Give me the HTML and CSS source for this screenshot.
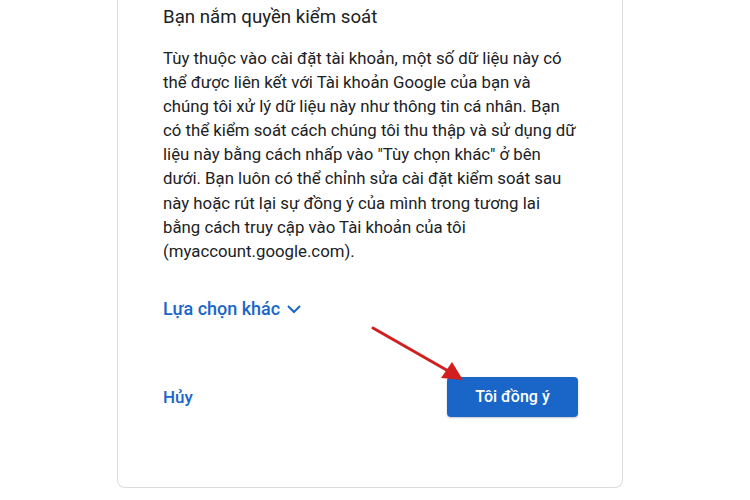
FILE: index.html
```html
<!DOCTYPE html>
<html lang="vi">
<head>
<meta charset="utf-8">
<link rel="stylesheet" href="styles.css">
</head>
<body>
<div class="card">
  <h2 class="title">Bạn nắm quyền kiểm soát</h2>
  <p class="text">Tùy thuộc vào cài đặt tài khoản, một số dữ liệu này có<br>thể được liên kết với Tài khoản Google của bạn và<br>chúng tôi xử lý dữ liệu này như thông tin cá nhân. Bạn<br>có thể kiểm soát cách chúng tôi thu thập và sử dụng dữ<br>liệu này bằng cách nhấp vào "Tùy chọn khác" ở bên<br>dưới. Bạn luôn có thể chỉnh sửa cài đặt kiểm soát sau<br>này hoặc rút lại sự đồng ý của mình trong tương lai<br>bằng cách truy cập vào Tài khoản của tôi<br>(myaccount.google.com).</p>
  <a class="more">Lựa chọn khác <svg class="chev" viewBox="0 0 16 16" width="16" height="16"><path d="M2 5 L8 11 L14 5" fill="none" stroke="currentColor" stroke-width="2"/></svg></a>
  <div class="actions">
    <a class="cancel">Hủy</a>
    <button class="agree">Tôi đồng ý</button>
  </div>
</div>
<svg class="arrow" width="750" height="500" viewBox="0 0 750 500">
  <line x1="373" y1="328" x2="450" y2="372" stroke="#d11f1f" stroke-width="3" stroke-linecap="round"/>
  <polygon points="463,380 441,378 452,362" fill="#d11f1f"/>
</svg>
</body>
</html>
```
FILE: styles.css
```css
html, body {
  margin: 0;
  padding: 0;
  background: #ffffff;
}
body {
  font-family: Roboto, "Liberation Sans", sans-serif;
  color: #202124;
  position: relative;
  width: 750px;
  height: 500px;
  overflow: hidden;
}
.card {
  margin-left: 117px;
  width: 506px;
  border: 1px solid #dadce0;
  border-top: none;
  border-radius: 0 0 8px 8px;
  padding: 5px 44px 70px 45px;
  box-sizing: border-box;
  display: flex;
  flex-direction: column;
  align-items: flex-start;
}
.title {
  margin: 0;
  font-size: 18.7px;
  font-weight: 400;
  line-height: 24px;
  color: #202124;
}
.text {
  margin: 17px 0 0;
  font-size: 16.8px;
  line-height: 24.1px;
  color: #202124;
}
.more {
  margin-top: 34px;
  display: flex;
  align-items: center;
  gap: 6px;
  font-size: 18px;
  line-height: 24px;
  color: #1a66c8;
  font-weight: 500;
}
.chev {
  display: block;
}
.actions {
  margin-top: 56px;
  align-self: stretch;
  display: flex;
  align-items: center;
  justify-content: space-between;
}
.cancel {
  font-size: 17px;
  font-weight: 500;
  color: #1a66c8;
}
.agree {
  width: 131px;
  height: 40px;
  border: none;
  border-radius: 4px;
  background: #1a66c8;
  color: #ffffff;
  font-family: Roboto, "Liberation Sans", sans-serif;
  font-size: 16px;
  font-weight: 500;
  box-shadow: 0 1px 2px rgba(60,64,67,0.3);
}
.arrow {
  position: absolute;
  left: 0;
  top: 0;
  pointer-events: none;
}
```
